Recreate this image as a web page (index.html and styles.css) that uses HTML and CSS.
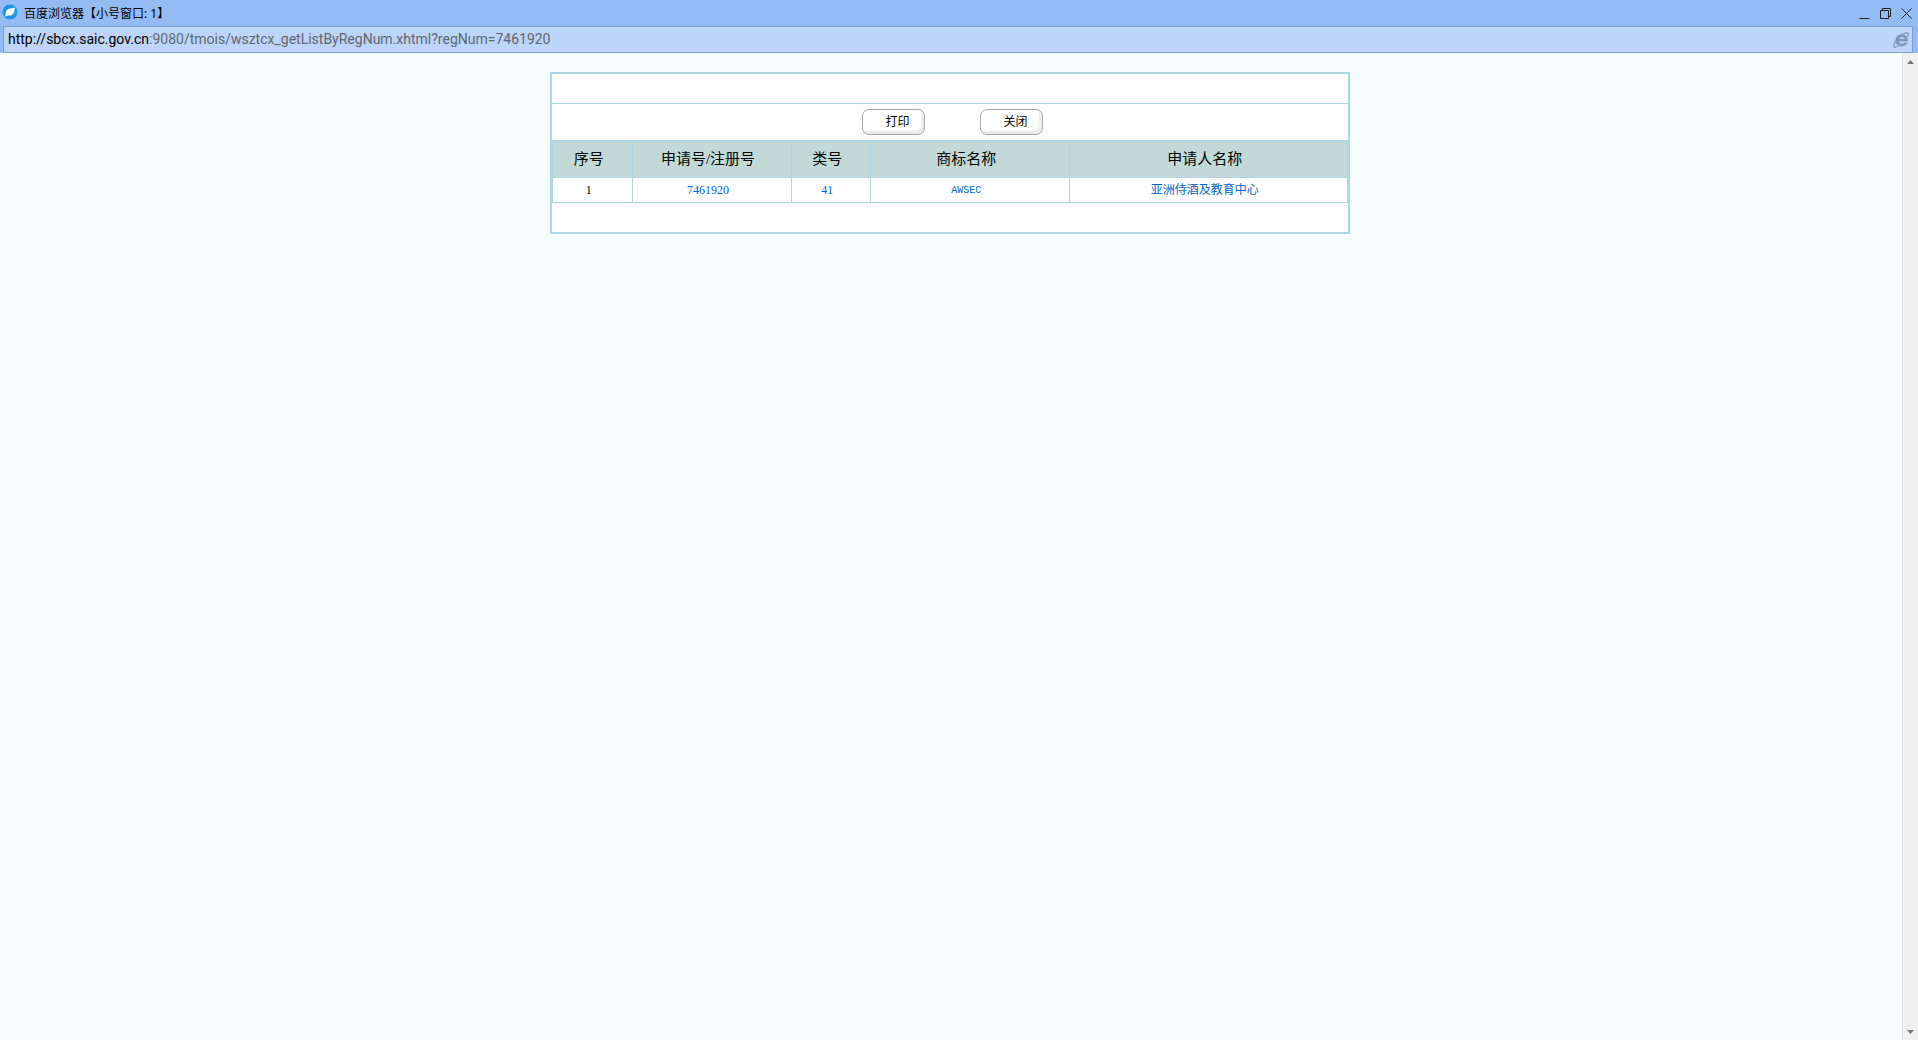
FILE: index.html
```html
<!DOCTYPE html>
<html lang="zh-CN">
<head>
<meta charset="utf-8">
<title>百度浏览器【小号窗口: 1】</title>
<link rel="stylesheet" href="styles.css">
</head>
<body>
<div class="window">
  <header class="titlebar">
    <svg class="logo" viewBox="0 0 16 16" aria-hidden="true">
      <circle cx="8" cy="8" r="7.5" fill="#1a98e6"/>
      <path d="M13 3.2Q12.300 5.500 12.300 7.500Q11.500 10.500 9 11.500Q6 11 3 12.800Q3.800 10.500 3.800 8Q4.500 5.500 7 4.500Q10 5 13 3.200Z" fill="#fff"/>
    </svg>
    <span class="title">百度浏览器【小号窗口: 1】</span>
    <div class="controls">
      <button type="button" aria-label="最小化"><svg viewBox="0 0 11 11"><path d="M0.500 10.500H10.500"/></svg></button>
      <button type="button" aria-label="还原"><svg viewBox="0 0 11 11"><path d="M0.500 2.500H8.500V10.500H0.500ZM2.500 2.500V0.500H10.500V8.500H8.500"/></svg></button>
      <button type="button" aria-label="关闭窗口"><svg viewBox="0 0 11 11"><path d="M0.500 0.500L10.500 10.500M10.500 0.500L0.500 10.500"/></svg></button>
    </div>
  </header>
  <div class="address">
    <div class="url" role="textbox" aria-label="地址" contenteditable="true" spellcheck="false"><span class="host">http://sbcx.saic.gov.cn</span>:9080/tmois/wsztcx_getListByRegNum.xhtml?regNum=7461920</div>
    <svg class="engine" viewBox="0 0 16 16" aria-hidden="true">
      <path fill="#7c95b8" fill-rule="evenodd" d="M15 9.300H6.200C6.300 11 7.300 11.800 8.800 11.800C9.900 11.800 10.700 11.400 11.200 10.600H14.700C13.800 13.100 11.700 14.400 8.900 14.400C5 14.400 2.600 12 2.600 8.400C2.600 4.800 5 2.300 8.900 2.300C12.900 2.300 15.200 5 15 9.300ZM6.300 7H11.500C11.300 5.600 10.400 4.900 8.900 4.900C7.500 4.900 6.600 5.600 6.300 7Z"/>
      <path d="M5 13.900C2.200 16 0 15.600 1 12.200C2.400 7.500 8.500 1.800 12.800 0.900C15.400 0.500 15.900 2.200 14.600 4.600" fill="none" stroke="#7c95b8" stroke-width="1.200"/>
    </svg>
  </div>
  <div class="viewport">
    <main class="page">
      <section class="panel">
        <div class="strip"></div>
        <div class="actions">
          <button class="action" type="button">打印</button>
          <button class="action" type="button">关闭</button>
        </div>
        <div class="results">
          <table>
            <colgroup><col class="c-no"><col class="c-reg"><col class="c-class"><col class="c-mark"><col class="c-owner"></colgroup>
            <thead>
              <tr><th scope="col">序号</th><th scope="col">申请号/注册号</th><th scope="col">类号</th><th scope="col">商标名称</th><th scope="col">申请人名称</th></tr>
            </thead>
            <tbody>
              <tr><td>1</td><td><a href="#">7461920</a></td><td><a href="#">41</a></td><td><a class="latin" href="#">AWSEC</a></td><td><a href="#">亚洲侍酒及教育中心</a></td></tr>
            </tbody>
          </table>
        </div>
        <div class="foot"></div>
      </section>
    </main>
    <div class="scrollbar">
      <button type="button" aria-label="向上滚动"><svg viewBox="0 0 7 4"><path d="M3.500 0L7 4H0Z"/></svg></button>
      <button type="button" aria-label="向下滚动"><svg viewBox="0 0 7 4"><path d="M0 0H7L3.500 4Z"/></svg></button>
    </div>
  </div>
</div>
</body>
</html>
```
FILE: styles.css
```css
* { box-sizing: border-box; }

body {
  margin: 0;
  font-family: "Liberation Serif", "Noto Sans CJK SC", serif;
  font-size: 12px;
  color: #000;
}

button {
  border: 0;
  padding: 0;
  background: none;
  font: inherit;
  color: inherit;
}

a { color: #0066cc; text-decoration: none; }

.window {
  display: flex;
  flex-direction: column;
  min-height: 100vh;
  background: #94bbf4;
}

.titlebar {
  display: flex;
  align-items: center;
  height: 26px;
  padding: 0 6px 0 2px;
  font-family: "Noto Sans", "Noto Sans CJK SC", sans-serif;
}

.logo { width: 16px; height: 16px; margin: 0 6px 2px 0; }

.title { flex: 1; padding-top: 2px; line-height: 16px; }

.controls { display: flex; gap: 10px; }

.controls svg {
  display: block;
  width: 11px;
  height: 11px;
  fill: none;
  stroke: #222;
}

.address {
  display: flex;
  align-items: center;
  height: 27px;
  margin: 0 5px 0 3px;
  padding: 0 3px 0 4px;
  border: 1px solid #7a9fd6;
  background: #bcd5f8;
}

.url {
  flex: 1;
  padding-bottom: 2px;
  outline: 0;
  font-family: Roboto, sans-serif;
  font-size: 14px;
  line-height: 20px;
  color: #5e6671;
}

.host { color: #000; }

.engine { width: 16px; height: 16px; }

.viewport { flex: 1; display: flex; }

.page {
  flex: 1;
  padding: 19px 2px 19px 0;
  background: #f5fdff;
}

.panel {
  width: 800px;
  max-width: 100%;
  margin: 0 auto;
  border: 2px solid #add6e4;
  background: #fdfdfd;
}

.strip { height: 30px; border-bottom: 1px solid #add6e4; }

.actions {
  display: flex;
  justify-content: center;
  align-items: center;
  gap: 55px;
  height: 36px;
  padding-left: 5px;
}

.action {
  width: 63px;
  height: 26px;
  padding-left: 8px;
  border: 1px solid #a5a5a5;
  border-radius: 7px;
  background: #fff;
  box-shadow: inset -3px -3px 1px #ececec;
  line-height: 16px;
}

.results { border-top: 1px solid #add6e4; }

table {
  width: 100%;
  table-layout: fixed;
  border-collapse: collapse;
  text-align: center;
  background: #fff;
}

.c-no, .c-class { width: 10%; }
.c-reg { width: 20%; }
.c-mark { width: 25%; }
.c-owner { width: 35%; }

th, td { padding: 0 7px 0 0; border: 1px solid #add6e4; }

th {
  height: 36px;
  padding-bottom: 2px;
  background: #c1dad7;
  font-size: 15px;
  font-weight: 400;
  line-height: 20px;
}

td { height: 25px; line-height: 16px; }

.latin { font-family: "Liberation Mono", monospace; font-size: 10px; }

.foot { height: 29px; }

.scrollbar {
  display: flex;
  flex-direction: column;
  justify-content: space-between;
  width: 16px;
  border-left: 1px solid #e4e4e4;
  background: #f0f0f0;
}

.scrollbar button { height: 17px; }

.scrollbar svg { display: block; width: 7px; height: 4px; margin: 0 auto; fill: #777; }
```
